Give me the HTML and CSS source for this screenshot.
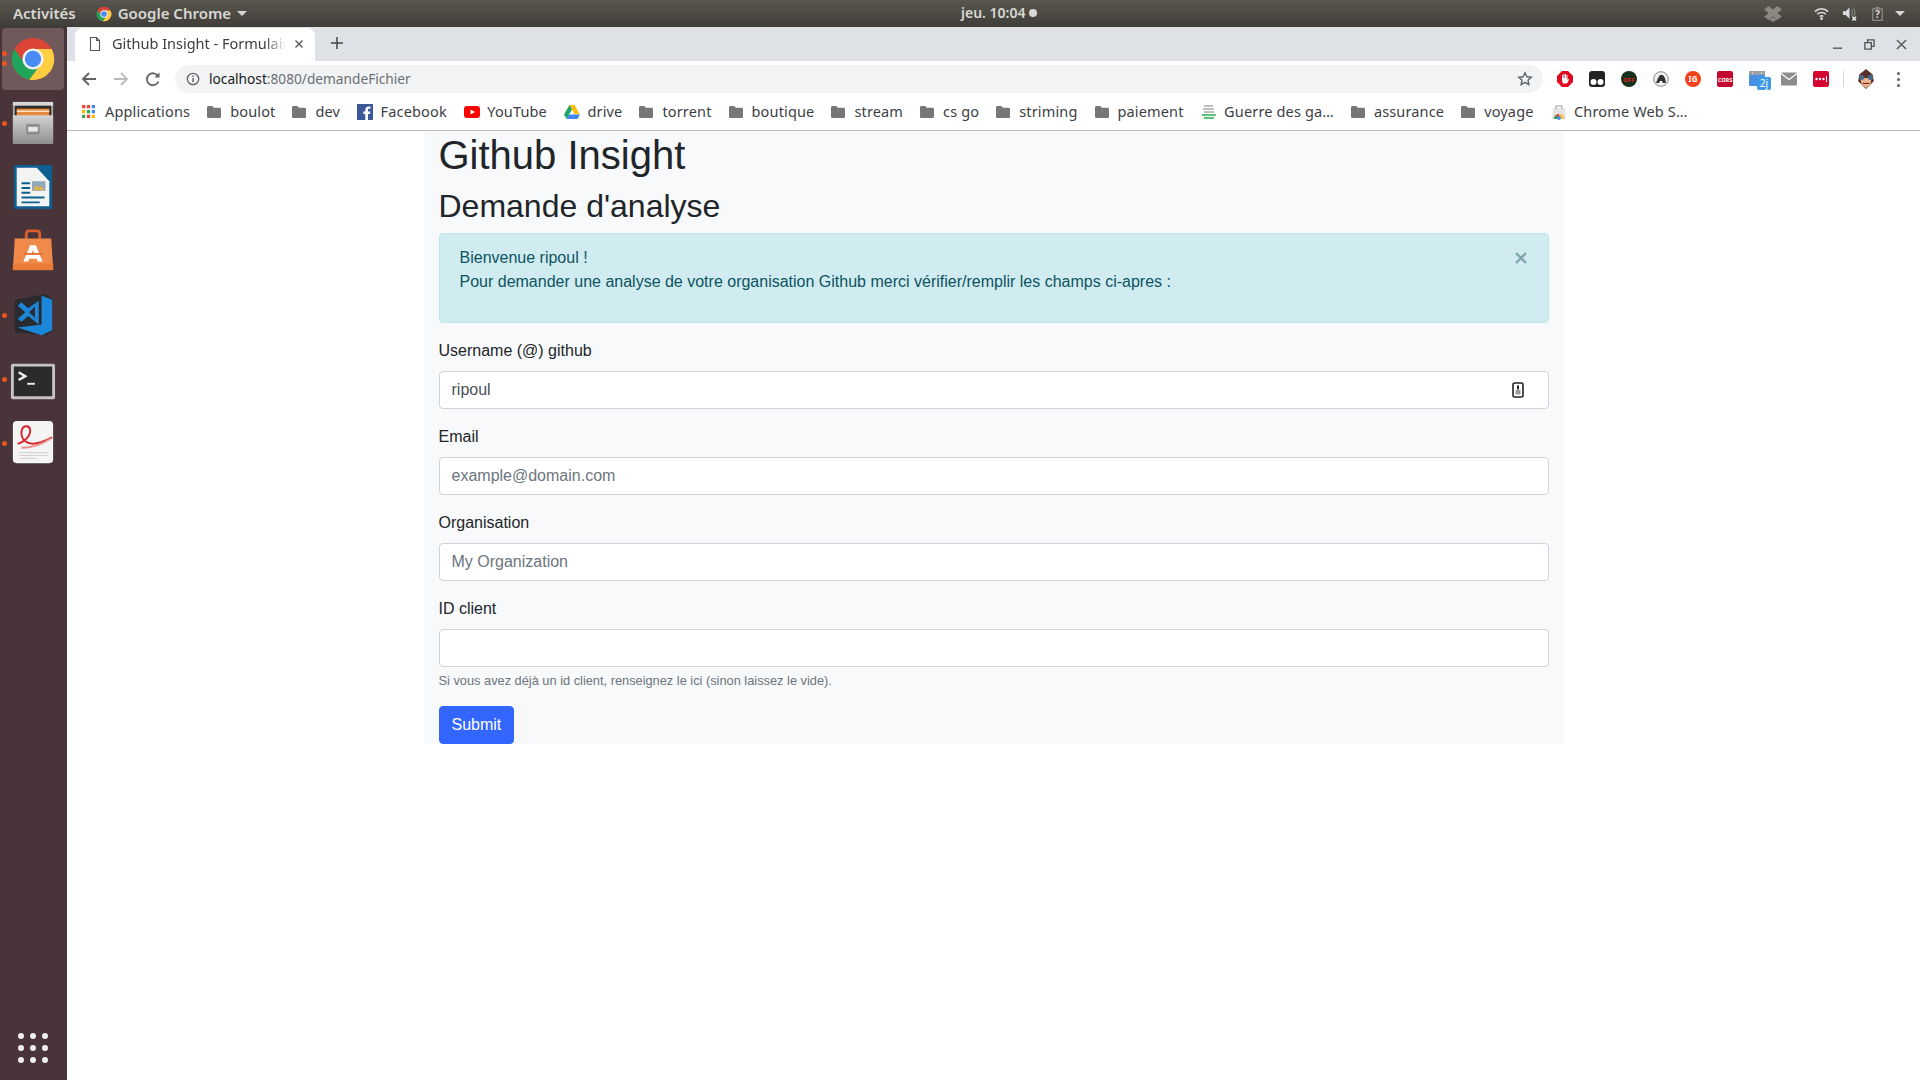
FILE: index.html
```html
<!DOCTYPE html>
<html lang="en">
<head>
    <meta charset="UTF-8">
    <title>Github Insight - Formulaire</title>
    <link rel="stylesheet" href="styles.css">
</head>
<body>
    <!-- Ubuntu top bar -->
    <div class="topbar">
        <div class="topbar-left">
            <span class="activities">Activités</span>
            <span class="app-menu">
                <svg class="app-logo" viewBox="0 0 48 48"><use href="#chrome-logo"/></svg>
                Google Chrome
                <span class="caret"></span>
            </span>
        </div>
        <div class="clock">jeu. 10:04 <span class="clock-dot"></span></div>
        <div class="tray">
            <svg class="tray-dropbox" viewBox="0 0 20 18"><path fill="#8a8880" d="M5 0l5 4 5-4 5 4-5 4 5 4-5 3.500-5-3.500-5 3.500L0 12l5-4-5-4z"/><path fill="#8a8880" d="M5 15l5-2 5 2-5 3z"/></svg>
            <svg class="tray-icon" viewBox="0 0 16 16"><path fill="none" stroke="#ddd" stroke-width="1.600" d="M1 6c4-4 10-4 14 0M3.500 8.700c2.500-2.400 6.500-2.400 9 0M6 11.200c1.200-1 2.800-1 4 0"/><circle cx="8" cy="13.500" r="1.500" fill="#ddd"/></svg>
            <svg class="tray-icon" viewBox="0 0 16 16"><path fill="#ddd" d="M1 5.500h3L8 1.500v12l-4-4H1z"/><path fill="none" stroke="#888" stroke-width="1.200" d="M10 4c1.500 1 1.500 5 0 6M12 2.500c2.500 2 2.500 7 0 9"/><path stroke="#eee" stroke-width="1.500" d="M11 11.500l4 4M15 11.500l-4 4"/></svg>
            <svg class="tray-icon" viewBox="0 0 16 16"><path fill="none" stroke="#8f8d86" stroke-width="1.300" d="M3 3h10v12.300H3z"/><rect x="6" y="1" width="4" height="2" fill="#8f8d86"/><text x="8" y="13" class="tray-q">?</text></svg>
            <span class="caret tray-caret"></span>
        </div>
    </div>

    <div class="desktop">
        <!-- Dock -->
        <div class="dock">
            <div class="dock-item dock-active">
                <span class="run-dot dot-a"></span><span class="run-dot dot-b"></span>
                <svg class="dock-icon" viewBox="0 0 48 48">
                    <symbol id="chrome-logo" viewBox="0 0 48 48">
                        <circle cx="24" cy="24" r="22" fill="#db4437"/>
                        <path fill="#ffcd40" d="M24 13.500h19.500A22 22 0 0 1 20 45.600l12.500-17z"/>
                        <path fill="#1fa55b" d="M4.500 13.500A22 22 0 0 0 20 45.600l12.500-17-8.500 5-8-4z"/>
                        <circle cx="24" cy="24" r="11" fill="#f3f3f3"/>
                        <circle cx="24" cy="24" r="8.500" fill="#4a8af4"/>
                    </symbol>
                    <use href="#chrome-logo"/>
                </svg>
            </div>
            <div class="dock-item">
                <span class="run-dot dot-one"></span>
                <svg class="dock-icon" viewBox="0 0 48 48">
                    <defs>
                        <linearGradient id="cabinet" x1="0" y1="0" x2="0" y2="1">
                            <stop offset="0" stop-color="#d2d2d2"/>
                            <stop offset="1" stop-color="#8f8f8f"/>
                        </linearGradient>
                    </defs>
                    <rect x="3" y="2" width="42" height="44" rx="2" fill="#a9a9a9"/>
                    <rect x="3" y="2" width="42" height="4" fill="#d6d6d6"/>
                    <rect x="5" y="6" width="38" height="11" fill="#2e2a27"/>
                    <rect x="7" y="9" width="34" height="8" fill="#e78a3c"/>
                    <rect x="7" y="11" width="34" height="1.500" fill="#f7e4c9"/>
                    <rect x="3" y="16" width="42" height="30" rx="1" fill="url(#cabinet)"/>
                    <rect x="17" y="25" width="14" height="11" rx="1" fill="#8c8c8c"/>
                    <rect x="19" y="28" width="10" height="5" fill="#e8e8e8"/>
                </svg>
            </div>
            <div class="dock-item">
                <svg class="dock-icon" viewBox="0 0 48 48">
                    <rect x="4" y="1" width="40" height="46" rx="2" fill="#0e5f8f"/>
                    <path fill="#f2f4f4" d="M7 4h21l13 14v26H7z"/>
                    <path fill="#0e5f8f" d="M12 19h9v2h-9zM12 24h9v2h-9zM12 29h9v2h-9zM12 34h24v2H12zM12 39h19v2H12z"/>
                    <rect x="23" y="18" width="14" height="10" fill="#8fa9b8"/>
                    <path fill="#e8b04a" d="M24 27l4-5 3 3 2-2 3 4z"/>
                </svg>
            </div>
            <div class="dock-item">
                <svg class="dock-icon" viewBox="0 0 48 48">
                    <path fill="none" stroke="#d9602b" stroke-width="3" d="M17 13V6c0-2 1-3 3-3h8c2 0 3 1 3 3v7"/>
                    <path fill="#f08a4b" d="M5 11h38l2 32H3z"/>
                    <rect x="3" y="37" width="42" height="7" fill="#ea7a38"/>
                    <path fill="#fff" d="M21 18h6l7 17h-5l-1-3H20l-1 3h-5zm3 5l-2 5h4z"/>
                    <rect x="15" y="26" width="19" height="2" fill="#e56f2c"/>
                </svg>
            </div>
            <div class="dock-item">
                <span class="run-dot dot-one"></span>
                <svg class="dock-icon" viewBox="0 0 48 48">
                    <path fill="#2a2b31" d="M5 8L37 2l7 5v33l-5 5-34-3z"/>
                    <path fill="#1c86d8" d="M33 4l11 4v32l-11 5L8 37l25-3z"/>
                    <path fill="#1c86d8" d="M30 9v25L19 25l-7 6-4-3 8-7-8-7 4-3 7 6z"/>
                    <path fill="#2a2b31" d="M26 15v12l-6-6z"/>
                </svg>
            </div>
            <div class="dock-item">
                <span class="run-dot dot-one"></span>
                <svg class="dock-icon" viewBox="0 0 48 48">
                    <rect x="1" y="8" width="46" height="37" rx="2" fill="#c4c3bf"/>
                    <rect x="4" y="11" width="40" height="31" fill="#2b2b2b"/>
                    <path fill="none" stroke="#eee" stroke-width="2.500" d="M9 17l7 4-7 4"/>
                    <rect x="18" y="28" width="8" height="2" fill="#eee"/>
                </svg>
            </div>
            <div class="dock-item">
                <span class="run-dot dot-one"></span>
                <svg class="dock-icon" viewBox="0 0 48 48">
                    <rect x="3" y="1" width="42" height="44" rx="4" fill="#f4f4f2"/>
                    <path fill="none" stroke="#d8232a" stroke-width="2" d="M8 25c6-2 14-8 13-15-1-5-8-5-9 2-1 8 6 15 17 12 5-1 11-4 15-6"/>
                    <path fill="none" stroke="#e98f8f" stroke-width="2" d="M12 29c10 0 22-4 31-10"/>
                    <path stroke="#cfcfcf" stroke-width="1" d="M10 34h30M10 37h30M10 40h18"/>
                </svg>
            </div>
            <div class="dock-spacer"></div>
            <div class="dock-apps">
                <span></span><span></span><span></span>
                <span></span><span></span><span></span>
                <span></span><span></span><span></span>
            </div>
        </div>

        <!-- Chrome window -->
        <div class="window">
            <div class="tabstrip">
                <div class="tab">
                    <svg class="tab-file" viewBox="0 0 12 14"><path fill="none" stroke="#555" stroke-width="1.100" d="M1.500.5h6l3 3v10h-9zM7.500.5v3h3"/></svg>
                    <span class="tab-title">Github Insight - Formulaire</span>
                    <svg class="tab-close" viewBox="0 0 10 10"><path stroke="#555" stroke-width="1.400" d="M1.500 1.500l7 7M8.500 1.500l-7 7"/></svg>
                </div>
                <svg class="tab-new" viewBox="0 0 12 12"><path stroke="#444" stroke-width="1.500" d="M6 0v12M0 6h12"/></svg>
                <div class="window-controls">
                    <svg viewBox="0 0 12 12"><path stroke="#555" stroke-width="1.500" d="M1 10h10"/></svg>
                    <svg viewBox="0 0 12 12"><path fill="none" stroke="#555" stroke-width="1.500" d="M1 4h7v7H1zM4 4V1h7v7H8"/></svg>
                    <svg viewBox="0 0 12 12"><path stroke="#555" stroke-width="1.500" d="M1 1l10 10M11 1L1 11"/></svg>
                </div>
            </div>

            <div class="toolbar">
                <svg class="nav-icon" viewBox="0 0 16 16"><path fill="none" stroke="#5f6368" stroke-width="1.800" d="M15 8H2M8 2L2 8l6 6"/></svg>
                <svg class="nav-icon" viewBox="0 0 16 16"><path fill="none" stroke="#b9bbbe" stroke-width="1.800" d="M1 8h13M8 2l6 6-6 6"/></svg>
                <svg class="nav-icon" viewBox="0 0 16 16"><path fill="none" stroke="#5f6368" stroke-width="1.800" d="M13.500 10.500A6 6 0 1 1 13 5"/><path fill="#5f6368" d="M14.500 1.500v5h-5z"/></svg>
                <div class="omnibox">
                    <svg class="info-icon" viewBox="0 0 14 14"><circle cx="7" cy="7" r="5.700" fill="none" stroke="#5f6368" stroke-width="1.300"/><path stroke="#5f6368" stroke-width="1.400" d="M7 6v4.200M7 3.500v1.400"/></svg>
                    <span class="url-host">localhost</span><span class="url-rest">:8080/demandeFichier</span>
                    <svg class="star-icon" viewBox="0 0 16 16"><path fill="none" stroke="#5f6368" stroke-width="1.400" d="M8 1.800l1.900 4 4.300.5-3.200 3 .9 4.300L8 11.400l-3.900 2.200.9-4.300-3.200-3 4.300-.5z"/></svg>
                </div>
                <div class="extensions">
                    <svg viewBox="0 0 16 16"><path fill="#e0071e" d="M5 0h6l5 5v6l-5 5H5l-5-5V5z"/><path fill="#fff" d="M5 7V4h1v3h.500V3h1v4H8V3h1v4h.500V4h1v5l1-1 .700.500L10 12.500H6L5 10z"/></svg>
                    <svg viewBox="0 0 16 16"><rect width="16" height="16" rx="3" fill="#222"/><circle cx="4.500" cy="11" r="3" fill="#fff"/><circle cx="11.500" cy="11" r="3" fill="#fff"/></svg>
                    <svg viewBox="0 0 16 16"><circle cx="8" cy="8" r="8" fill="#17301c"/><text x="8" y="10.500" class="ext-off">OFF</text></svg>
                    <svg viewBox="0 0 16 16"><circle cx="8" cy="8" r="7.300" fill="#eee" stroke="#888"/><path fill="#333" d="M3 12l2-5 2-3h3l2 3 1 5h-3l-1-2H7l-1 2z"/></svg>
                    <svg viewBox="0 0 16 16"><circle cx="8" cy="8" r="8" fill="#f2401b"/><text x="8" y="10.800" class="ext-ig">IG</text></svg>
                    <svg viewBox="0 0 16 16"><rect width="16" height="16" rx="2" fill="#c4082f"/><text x="8" y="10.500" class="ext-cors">CORS</text></svg>
                    <div class="ext-cal">
                        <svg viewBox="0 0 16 16"><rect width="16" height="15" rx="1" fill="#4a90e2"/><rect width="16" height="4" fill="#9aa0a6"/><path stroke="#fff" d="M3 2h1M12 2h1"/></svg>
                        <span class="ext-badge">2j</span>
                    </div>
                    <svg viewBox="0 0 16 16"><rect y="1.500" width="16" height="13" rx="1" fill="#8c8c8c"/><path fill="none" stroke="#fff" stroke-width="1.300" d="M0 2.500l8 6 8-6"/></svg>
                    <svg viewBox="0 0 16 16"><rect width="16" height="16" rx="2" fill="#d3072f"/><circle cx="3.500" cy="8" r="1.200" fill="#fff"/><circle cx="7" cy="8" r="1.200" fill="#fff"/><circle cx="10.500" cy="8" r="1.200" fill="#fff"/><rect x="13" y="5" width="1" height="6" fill="#fff"/></svg>
                    <span class="ext-sep"></span>
                    <svg class="ext-avatar" viewBox="0 0 18 18"><path fill="#5b2f2a" d="M3 5l6-5 6 5 1 6-7 7-7-7z"/><path fill="#e9b48f" d="M4 8h10l-1 6-4 3-4-3z"/><circle cx="5" cy="7.500" r="2.400" fill="#4a6a8a"/><circle cx="13" cy="7.500" r="2.400" fill="#4a6a8a"/><path stroke="#7a1e1e" d="M6 13h6"/></svg>
                    <span class="kebab"><i></i><i></i><i></i></span>
                </div>
            </div>

            <div class="bookmarks">
                <span class="bookmark">
                    <svg class="bm-apps" viewBox="0 0 12 12">
                        <path fill="#ea4335" d="M0 0h3v3H0zM4.500 0h3v3h-3z"/><path fill="#4285f4" d="M9 0h3v3H9zM9 4.500h3v3H9z"/>
                        <path fill="#fbbc05" d="M0 4.500h3v3H0zM9 9h3v3H9z"/><path fill="#34a853" d="M4.500 4.500h3v3h-3zM0 9h3v3H0z"/><path fill="#ea4335" d="M4.500 9h3v3h-3z"/>
                    </svg>
                    Applications
                </span>
                <span class="bookmark"><svg class="bm-folder" viewBox="0 0 14 12"><use href="#folder"/></svg>boulot</span>
                <span class="bookmark"><svg class="bm-folder" viewBox="0 0 14 12"><use href="#folder"/></svg>dev</span>
                <span class="bookmark">
                    <svg class="bm-icon" viewBox="0 0 16 16"><rect width="16" height="16" fill="#3b5998"/><path fill="#fff" d="M11 16v-6h2l.400-2.500H11V6c0-.800.300-1.200 1.200-1.200h1.300V2.500H11.500C9.300 2.500 8.300 3.800 8.300 5.700v1.800h-2V10h2v6z"/></svg>
                    Facebook
                </span>
                <span class="bookmark">
                    <svg class="bm-icon" viewBox="0 0 16 16"><rect y="2" width="16" height="12" rx="3" fill="#f00"/><path fill="#fff" d="M6.500 5.500L11 8l-4.500 2.500z"/></svg>
                    YouTube
                </span>
                <span class="bookmark">
                    <svg class="bm-icon" viewBox="0 0 16 16"><path fill="#fbbc05" d="M5.500 1h5l5 9h-5z"/><path fill="#1fa463" d="M5.500 1L0 10.500 2.500 15l5.500-9.500z"/><path fill="#4285f4" d="M5 10.500h11L13.500 15h-11z"/></svg>
                    drive
                </span>
                <span class="bookmark"><svg class="bm-folder" viewBox="0 0 14 12"><use href="#folder"/></svg>torrent</span>
                <span class="bookmark"><svg class="bm-folder" viewBox="0 0 14 12"><use href="#folder"/></svg>boutique</span>
                <span class="bookmark"><svg class="bm-folder" viewBox="0 0 14 12"><use href="#folder"/></svg>stream</span>
                <span class="bookmark"><svg class="bm-folder" viewBox="0 0 14 12"><use href="#folder"/></svg>cs go</span>
                <span class="bookmark"><svg class="bm-folder" viewBox="0 0 14 12"><use href="#folder"/></svg>striming</span>
                <span class="bookmark"><svg class="bm-folder" viewBox="0 0 14 12"><use href="#folder"/></svg>paiement</span>
                <span class="bookmark">
                    <svg class="bm-icon" viewBox="0 0 16 16"><path stroke="#aaa" stroke-width="1.500" d="M3 2h9M2 5h11M3 8h10"/><path stroke="#5cc37c" stroke-width="2" d="M1 11h14M3 14h10"/></svg>
                    Guerre des ga…
                </span>
                <span class="bookmark"><svg class="bm-folder" viewBox="0 0 14 12"><use href="#folder"/></svg>assurance</span>
                <span class="bookmark"><svg class="bm-folder" viewBox="0 0 14 12"><use href="#folder"/></svg>voyage</span>
                <span class="bookmark">
                    <svg class="bm-icon" viewBox="0 0 16 16"><path fill="#e4e4e4" d="M2 4h12l1 11H1z"/><path fill="none" stroke="#999" d="M5 5V2h6v3"/><path fill="#e34133" d="M3 15a5 5 0 0 1 10 0z"/><path fill="#ffce44" d="M8 10a5 5 0 0 1 5 5H9z"/><path fill="#2a9f5a" d="M3 15a5 5 0 0 1 2-4l2 4z"/><circle cx="8" cy="14" r="2" fill="#4a8af4"/></svg>
                    Chrome Web S…
                </span>
                <svg class="svg-defs" viewBox="0 0 14 12"><symbol id="folder" viewBox="0 0 14 12"><path fill="#757779" d="M0 1.500C0 .7.600 0 1.300 0h4l1.500 1.800h5.900c.700 0 1.300.6 1.300 1.300v7.600c0 .7-.6 1.300-1.300 1.300H1.300C.6 12 0 11.400 0 10.700z"/></symbol></svg>
            </div>

            <!-- Page content -->
            <div class="viewport">
                <div class="container">
                    <h1>Github Insight</h1>
                    <h2>Demande d'analyse</h2>

                    <div class="alert">
                        <svg class="alert-close" viewBox="0 0 12 12"><path stroke="#7ea5ab" stroke-width="2.400" d="M1 1l10 10M11 1L1 11"/></svg>
                        <p>Bienvenue ripoul !<br>Pour demander une analyse de votre organisation Github merci vérifier/remplir les champs ci-apres :</p>
                    </div>

                    <form>
                        <div class="form-group">
                            <label for="username">Username (@) github</label>
                            <div class="input-wrap">
                                <input class="form-control" type="text" id="username" value="ripoul">
                                <svg class="input-badge" viewBox="0 0 12 16"><rect x="1" y="1" width="10" height="14" rx="1.500" fill="#fff" stroke="#222" stroke-width="1.600"/><rect x="5" y="3.500" width="2" height="4" fill="#222"/><rect x="3.500" y="8" width="5" height="4.500" fill="#999"/></svg>
                            </div>
                        </div>
                        <div class="form-group">
                            <label for="email">Email</label>
                            <input class="form-control" type="text" id="email" placeholder="example@domain.com">
                        </div>
                        <div class="form-group">
                            <label for="organisation">Organisation</label>
                            <input class="form-control" type="text" id="organisation" placeholder="My Organization">
                        </div>
                        <div class="form-group">
                            <label for="idClient">ID client</label>
                            <input class="form-control" type="text" id="idClient">
                            <small>Si vous avez déjà un id client, renseignez le ici (sinon laissez le vide).</small>
                        </div>
                        <button class="btn-submit" type="button">Submit</button>
                    </form>
                </div>
            </div>
        </div>
    </div>
</body>
</html>
```

FILE: styles.css
```css
/* General */
* {
    box-sizing: border-box;
}

html, body {
    height: 100%;
}

body {
    margin: 0;
    display: flex;
    flex-direction: column;
    height: 1080px;
    overflow: hidden;
    font-family: "Liberation Sans", Arial, sans-serif;
    font-size: 16px;
    line-height: 1.5;
    color: #212529;
    background-color: #fff;
}

svg {
    display: block;
    flex-shrink: 0;
}

.svg-defs {
    width: 0;
    height: 0;
}

/* Top bar */
.topbar {
    height: 27px;
    flex-shrink: 0;
    display: flex;
    align-items: center;
    justify-content: space-between;
    position: relative;
    padding: 0 15px 0 13px;
    background: linear-gradient(#5a5750, #3f3d37);
    color: #d8d8d4;
    font-family: "Noto Sans", sans-serif;
    font-size: 15px;
    font-weight: 600;
}

.topbar-left {
    display: flex;
    align-items: center;
    gap: 20px;
}

.app-menu {
    display: flex;
    align-items: center;
    gap: 6px;
}

.app-logo {
    width: 16px;
    height: 16px;
}

.caret {
    display: inline-block;
    width: 0;
    height: 0;
    border-left: 5px solid transparent;
    border-right: 5px solid transparent;
    border-top: 5px solid #d8d8d4;
}

.clock {
    position: absolute;
    left: 961px;
    top: 0;
    line-height: 26px;
    font-size: 14px;
    display: flex;
    align-items: center;
    gap: 4px;
}

.clock-dot {
    width: 8px;
    height: 8px;
    border-radius: 50%;
    background-color: #d8d8d4;
}

.tray {
    display: flex;
    align-items: center;
    gap: 13px;
}

.tray-dropbox {
    width: 18px;
    height: 16px;
    margin-right: 19px;
}

.tray-icon {
    width: 15px;
    height: 15px;
}

.tray-caret {
    margin-left: -3px;
}

.tray-q {
    font-size: 11px;
    font-weight: 700;
    fill: #d8d8d4;
    text-anchor: middle;
}

/* Dock */
.desktop {
    flex: 1;
    display: flex;
    min-height: 0;
}

.dock {
    width: 67px;
    flex-shrink: 0;
    display: flex;
    flex-direction: column;
    align-items: flex-start;
    padding: 1px 0 0 2px;
    background-color: #49343a;
}

.dock-item {
    position: relative;
    width: 62px;
    height: 62px;
    margin-bottom: 2px;
    display: flex;
    align-items: center;
    justify-content: center;
    border-radius: 4px;
}

.dock-active {
    background-color: #70595b;
}

.dock-icon {
    width: 46px;
    height: 46px;
}

.run-dot {
    position: absolute;
    left: 0;
    width: 5px;
    height: 5px;
    border-radius: 50%;
    background-color: #e95420;
}

.dot-a {
    top: 23px;
}

.dot-b {
    top: 33px;
}

.dot-one {
    top: 29px;
}

.dock-spacer {
    flex: 1;
}

.dock-apps {
    display: grid;
    grid-template-columns: repeat(3, 6px);
    gap: 6px;
    margin: 0 0 17px 16px;
}

.dock-apps span {
    width: 6px;
    height: 6px;
    border-radius: 50%;
    background-color: #eeeeee;
}

/* Chrome window */
.window {
    flex: 1;
    display: flex;
    flex-direction: column;
    min-width: 0;
}

.tabstrip {
    height: 34px;
    flex-shrink: 0;
    display: flex;
    align-items: flex-end;
    padding-left: 8px;
    background-color: #dee1e6;
    font-family: "Noto Sans", sans-serif;
}

.tab {
    width: 240px;
    height: 33px;
    display: flex;
    align-items: center;
    padding: 0 11px 2px 14px;
    background-color: #fff;
    border-radius: 8px 8px 0 0;
    font-size: 14.500px;
    color: #3c4043;
}

.tab-file {
    width: 12px;
    height: 14px;
    margin-right: 11px;
}

.tab-title {
    flex: 1;
    overflow: hidden;
    white-space: nowrap;
    -webkit-mask-image: linear-gradient(to right, #000 88%, transparent);
    mask-image: linear-gradient(to right, #000 88%, transparent);
}

.tab-close {
    width: 10px;
    height: 10px;
    margin-left: 8px;
}

.tab-new {
    width: 12px;
    height: 12px;
    margin: 0 0 12px 16px;
}

.window-controls {
    margin-left: auto;
    display: flex;
    align-items: center;
    gap: 21px;
    height: 100%;
    padding-right: 13px;
}

.window-controls svg {
    width: 11px;
    height: 11px;
}

.toolbar {
    height: 36px;
    flex-shrink: 0;
    display: flex;
    align-items: center;
    padding: 0 0 0 14px;
    background-color: #fff;
    font-family: "Noto Sans", sans-serif;
}

.nav-icon {
    width: 16px;
    height: 16px;
    margin-right: 16px;
}

.omnibox {
    width: 1368px;
    height: 28px;
    display: flex;
    align-items: center;
    margin-left: -2px;
    padding: 0 10px 0 11px;
    background-color: #f1f3f4;
    border-radius: 14px;
    font-size: 13.700px;
}

.info-icon {
    width: 14px;
    height: 14px;
    margin-right: 9px;
}

.url-host {
    color: #202124;
}

.url-rest {
    color: #6b6f73;
}

.star-icon {
    width: 16px;
    height: 16px;
    margin-left: auto;
}

.extensions {
    flex: 1;
    display: flex;
    align-items: center;
    gap: 16px;
    padding-left: 14px;
}

.extensions svg {
    width: 16px;
    height: 16px;
}

.ext-off {
    font-size: 6px;
    font-weight: 700;
    fill: #e02020;
    text-anchor: middle;
}

.ext-ig {
    font-size: 8px;
    font-weight: 700;
    fill: #fff;
    text-anchor: middle;
}

.ext-cors {
    font-size: 5.500px;
    font-weight: 700;
    fill: #fff;
    text-anchor: middle;
}

.ext-cal {
    position: relative;
    width: 16px;
    height: 16px;
}

.ext-badge {
    position: absolute;
    left: 8px;
    top: 6px;
    width: 14px;
    height: 13px;
    border-radius: 2px;
    background-color: #3b99e8;
    color: #fff;
    font-size: 10px;
    line-height: 13px;
    text-align: center;
}

.ext-sep {
    width: 1px;
    height: 16px;
    margin-left: -2px;
    background-color: #d5d7da;
}

.extensions .ext-avatar {
    width: 20px;
    height: 20px;
    margin-left: -4px;
}

.kebab {
    display: flex;
    flex-direction: column;
    gap: 3px;
    margin-left: 5px;
}

.kebab i {
    width: 3px;
    height: 3px;
    border-radius: 50%;
    background-color: #5f6368;
}

.bookmarks {
    height: 34px;
    flex-shrink: 0;
    display: flex;
    align-items: center;
    gap: 17px;
    padding: 0 0 4px 15px;
    background-color: #fff;
    border-bottom: 1px solid #b8babd;
    font-family: "Noto Sans", sans-serif;
    font-size: 14.500px;
    letter-spacing: 0.150px;
    color: #3c4043;
    white-space: nowrap;
}

.bookmark {
    display: flex;
    align-items: center;
    gap: 9px;
}

.bm-apps {
    width: 13px;
    height: 13px;
    margin-right: 1px;
}

.bm-folder {
    width: 14px;
    height: 12px;
}

.bm-icon {
    width: 16px;
    height: 16px;
    margin-right: -1.500px;
}

/* Page content */
.viewport {
    flex: 1;
    background-color: #fff;
}

.container {
    width: 1140px;
    margin: 0 auto;
    padding: 0 15px;
    background-color: #f8f9fa;
}

h1, h2 {
    margin: 0 0 8px;
    font-weight: 500;
    line-height: 1.2;
}

h1 {
    font-size: 40px;
}

h2 {
    font-size: 32px;
}

.alert {
    position: relative;
    margin-bottom: 16px;
    padding: 12px 20px;
    background-color: #d1ecf1;
    border: 1px solid #bee5eb;
    border-radius: 4px;
    color: #0c5460;
}

.alert p {
    margin: 0 0 16px;
}

.alert-close {
    position: absolute;
    top: 18px;
    right: 21px;
    width: 12px;
    height: 12px;
}

.form-group {
    margin-bottom: 16px;
}

label {
    display: block;
    margin-bottom: 8px;
}

.input-wrap {
    position: relative;
}

.form-control {
    display: block;
    width: 100%;
    height: 38px;
    padding: 6px 12px;
    background-color: #fff;
    border: 1px solid #ced4da;
    border-radius: 4px;
    font-family: inherit;
    font-size: 16px;
    color: #495057;
}

.form-control::placeholder {
    color: #6c757d;
    opacity: 1;
}

.input-badge {
    position: absolute;
    top: 11px;
    right: 25px;
    width: 12px;
    height: 16px;
}

small {
    display: block;
    margin-top: 4px;
    font-size: 12.800px;
    line-height: 19px;
    color: #6c757d;
}

.btn-submit {
    display: block;
    height: 38px;
    padding: 6px 12px;
    background-color: #3366ff;
    border: 1px solid #3366ff;
    border-radius: 4px;
    font-family: inherit;
    font-size: 16px;
    color: #fff;
    cursor: pointer;
}
```
